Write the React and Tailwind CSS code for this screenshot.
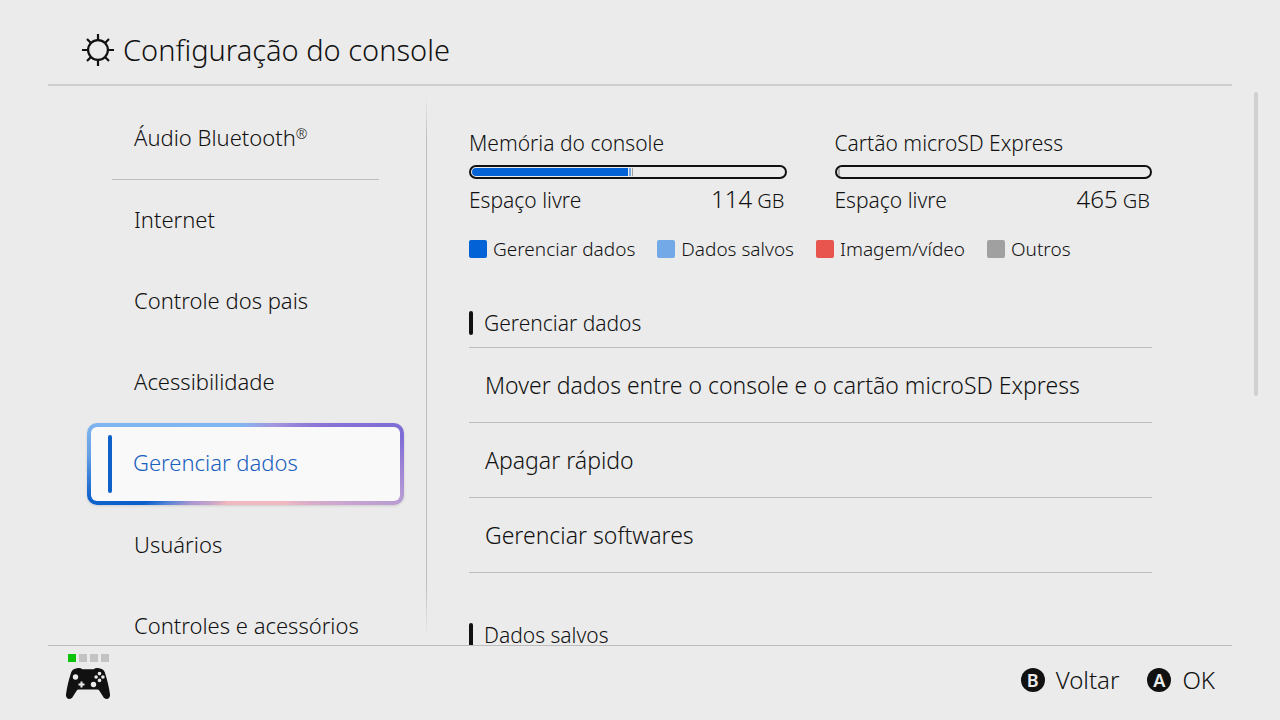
const legend = [
  { label: 'Gerenciar dados', color: 'bg-[#0363d6]' },
  { label: 'Dados salvos', color: 'bg-[#74a9e8]' },
  { label: 'Imagem/vídeo', color: 'bg-[#e8554e]' },
  { label: 'Outros', color: 'bg-[#a0a0a0]' },
];

const actions = [
  'Mover dados entre o console e o cartão microSD Express',
  'Apagar rápido',
  'Gerenciar softwares',
];

function SettingsIcon() {
  return (
    <svg viewBox="-17 -17 34 34" className="size-[34px]" fill="none" stroke="#111" strokeWidth="2.2">
      <circle r="9.9" />
      <path d="M0-10V-16M0 10V16M-10 0H-16M10 0H16M-7-7L-11-11M7-7L11-11M-7 7L-11 11M7 7L11 11" />
    </svg>
  );
}

function ControllerIcon() {
  return (
    <svg viewBox="0 0 44 32" className="w-11 h-8">
      <path
        fill="#111"
        d="M9 .8C11.500-.2 14.500-.2 16.500 1.200H27.500C29.500-.2 32.500-.2 35 .8C37.500 1.500 38.600 3.300 39.200 5.500C41.200 12 43.200 19.500 44 26.500C44.300 29.300 42.800 31 40.800 31C39 31 37.800 30 36.900 28.300L33.200 22.400C32.800 21.800 32.300 21.500 31.500 21.500H12.500C11.700 21.500 11.200 21.800 10.800 22.400L7.100 28.300C6.200 30 5 31 3.200 31C1.200 31-.3 29.300 0 26.500C.8 19.500 2.800 12 4.800 5.500C5.400 3.300 6.500 1.500 9 .8Z"
      />
      <g fill="#ebebeb">
        <circle cx="9.500" cy="9" r="2.700" />
        <circle cx="27.500" cy="16.500" r="2.700" />
        <circle cx="33.500" cy="5.600" r="1.800" />
        <circle cx="33.500" cy="12.400" r="1.800" />
        <circle cx="30.100" cy="9" r="1.800" />
        <circle cx="36.900" cy="9" r="1.800" />
        <path d="M14.500 13.500h2v2h2v2h-2v2h-2v-2h-2v-2h2z" />
      </g>
    </svg>
  );
}

function SidebarItem({ children, active }) {
  if (active) {
    return (
      <button className="ml-[39px] mr-[22px] h-[82px] rounded-[10px] p-1 text-left shadow-sm bg-[conic-gradient(from_90deg_at_50%_50%,#9a7fd6_0deg,#b49bd3_12deg,#cba6cf_22deg,#f0b8c0_45deg,#f0b8c0_115deg,#a996d0_145deg,#5c86d8_153deg,#0a5fcb_159deg,#0f63cd_168deg,#6aa2e6_184deg,#80b6f0_196deg,#83b6f0_265deg,#a396dc_308deg,#8a72d6_334deg,#7c6cd6_350deg,#9a7fd6_360deg)]">
        <span className="flex h-full items-center rounded-md bg-[#f9f9f9] pl-[17px] text-[#1a60bd]">
          <span className="mr-[21px] h-[58px] w-1 rounded-sm bg-[#0f60c8]" />
          <span className="pb-1">{children}</span>
        </span>
      </button>
    );
  }
  return <button className="h-[81px] pl-[86px] pb-1 text-left">{children}</button>;
}

function Storage({ title, free, children }) {
  return (
    <section className="flex-1">
      <h2 className="text-[21px] leading-7">{title}</h2>
      <div className="mt-2 flex h-[14px] gap-px overflow-hidden rounded-full border-2 border-[#111] p-px">{children}</div>
      <div className="mt-1 flex items-baseline justify-between text-[21px] leading-8">
        <span>Espaço livre</span>
        <span className="pr-0.5 text-xl leading-8">
          <span className="text-2xl leading-8">{free}</span> GB
        </span>
      </div>
    </section>
  );
}

function GroupTitle({ children }) {
  return (
    <h2 className="flex items-center gap-[11px] text-[21px] leading-6">
      <span className="h-6 w-1 rounded-sm bg-[#111]" />
      {children}
    </h2>
  );
}

function KeyHint({ letter, children }) {
  return (
    <button className="flex items-center gap-[11px]">
      <span className="flex size-6 items-center justify-center rounded-full bg-[#111] text-lg leading-6 font-semibold text-[#ebebeb]">
        {letter}
      </span>
      {children}
    </button>
  );
}

export default function App() {
  return (
    <div className="flex h-screen flex-col bg-[#ebebeb] font-['Noto_Sans',sans-serif] font-light text-[#111]">
      <header className="mx-12 flex h-[86px] shrink-0 items-center gap-2 border-b-2 border-[#cfcfcf] pl-[33px] pt-4">
        <SettingsIcon />
        <h1 className="text-[29px] leading-9">Configuração do console</h1>
      </header>

      <main className="flex min-h-0 flex-1 pl-12">
        <nav className="flex w-[378px] shrink-0 flex-col overflow-hidden pt-3 text-[22px] leading-8 *:shrink-0">
          <SidebarItem>
            Áudio Bluetooth<sup className="text-sm">®</sup>
          </SidebarItem>
          <hr className="ml-16 mr-[47px] border-[#bdbdbd]" />
          <SidebarItem>Internet</SidebarItem>
          <SidebarItem>Controle dos pais</SidebarItem>
          <SidebarItem>Acessibilidade</SidebarItem>
          <SidebarItem active>Gerenciar dados</SidebarItem>
          <SidebarItem>Usuários</SidebarItem>
          <SidebarItem>Controles e acessórios</SidebarItem>
        </nav>
        <div className="mt-2.5 mb-2 w-px bg-[linear-gradient(transparent,#bdbdbd_8%,#bdbdbd_90%,transparent)]" />

        <div className="flex min-w-0 flex-1 flex-col overflow-hidden pt-[43px] pr-[102px] pl-[42px] *:shrink-0">
          <div className="flex gap-12">
            <Storage title="Memória do console" free="114">
              <span className="w-1/2 rounded-l-full bg-[#0363d6]" />
              <span className="w-0.5 bg-[#74a9e8]" />
              <span className="w-px bg-[#a0a0a0]" />
            </Storage>
            <Storage title="Cartão microSD Express" free="465">
              <span className="w-0.5 rounded-l-full bg-[#b0b0b0]" />
            </Storage>
          </div>

          <ul className="mt-[18px] flex gap-[22px] text-[19px] leading-7">
            {legend.map((item) => (
              <li key={item.label} className="flex items-center gap-1.5">
                <span className={`size-[18px] rounded-xs ${item.color}`} />
                {item.label}
              </li>
            ))}
          </ul>

          <div className="mt-12">
            <GroupTitle>Gerenciar dados</GroupTitle>
            <div className="mt-3 border-t border-[#bdbdbd]">
              {actions.map((action) => (
                <button
                  key={action}
                  className="block h-[75px] w-full border-b border-[#bdbdbd] pl-4 text-left text-[23px] leading-8"
                >
                  {action}
                </button>
              ))}
            </div>
          </div>
          <div className="mt-[50px]">
            <GroupTitle>Dados salvos</GroupTitle>
          </div>
        </div>
        <div className="mt-1.5 mr-[22px] h-[304px] w-1 rounded-full bg-[#d0d0d0]" />
      </main>

      <footer className="mx-12 flex h-[75px] shrink-0 justify-between border-t border-[#bdbdbd] pr-[17px] pl-[18px]">
        <div className="pt-2">
          <div className="flex gap-[3px] pl-0.5">
            <span className="size-2 bg-[#0bc30b]" />
            <span className="size-2 bg-[#c3c3c3]" />
            <span className="size-2 bg-[#c3c3c3]" />
            <span className="size-2 bg-[#c3c3c3]" />
          </div>
          <div className="mt-1.5">
            <ControllerIcon />
          </div>
        </div>
        <div className="flex items-center gap-7 pb-1.5 text-2xl">
          <KeyHint letter="B">Voltar</KeyHint>
          <KeyHint letter="A">OK</KeyHint>
        </div>
      </footer>
    </div>
  );
}
